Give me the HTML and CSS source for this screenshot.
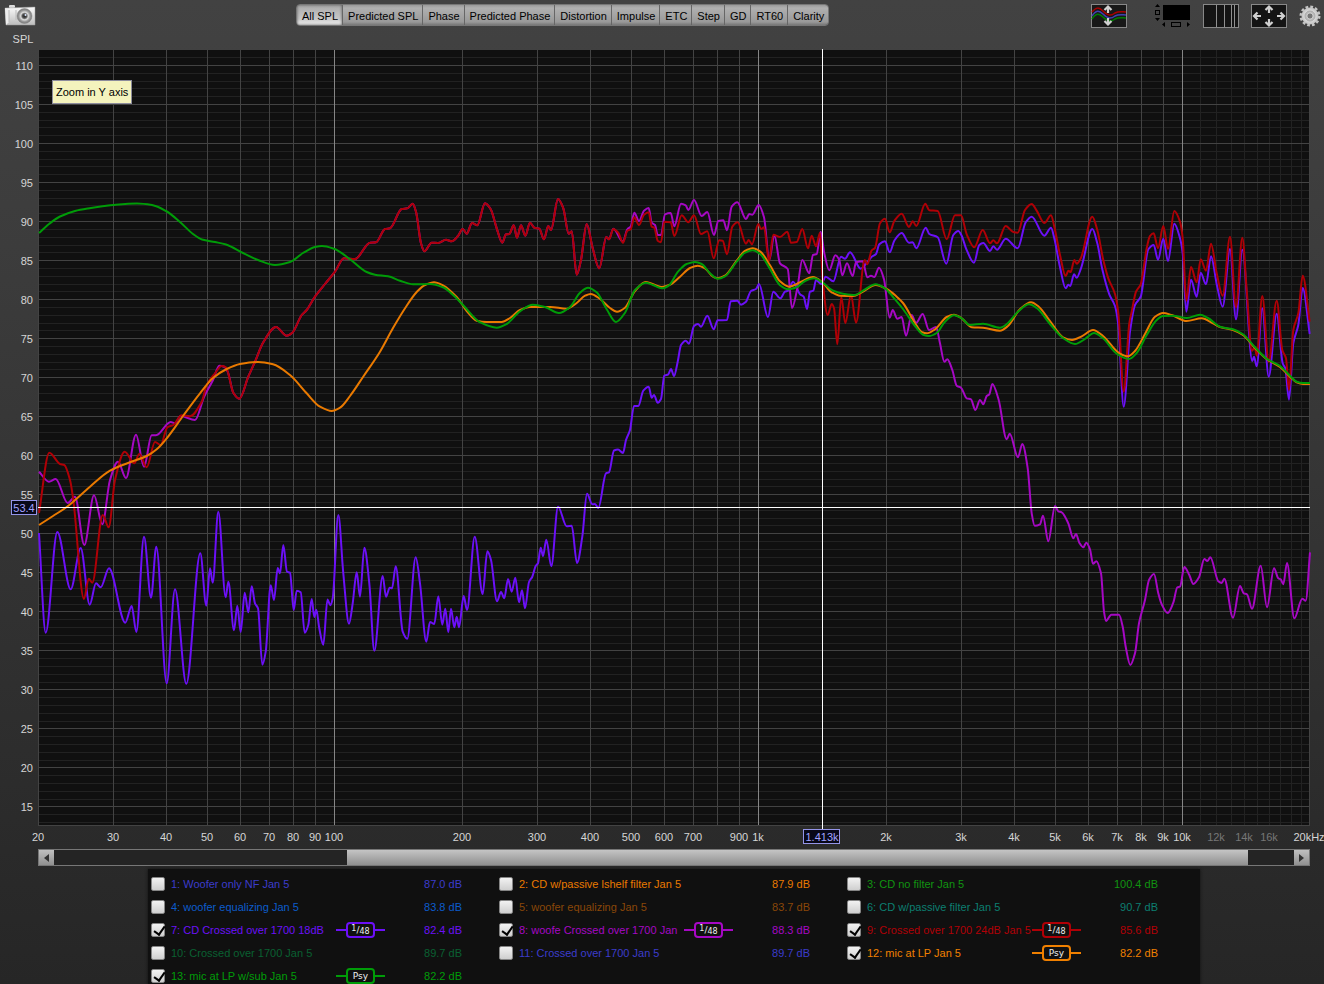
FILE: index.html
```html
<!doctype html>
<html lang="en">
<head>
    <meta charset="utf-8">
    <title>All SPL</title>
    <link rel="stylesheet" href="styles.css">
</head>
<body>
    <header class="toolbar">
        <button class="icon-button camera" aria-label="Capture graph">
            <svg width="32" height="22" viewBox="0 0 32 22">
                <defs>
                    <linearGradient id="body" x1="0" y1="0" x2="0" y2="1">
                        <stop offset="0" stop-color="#fafafa"/>
                        <stop offset="1" stop-color="#bdbdbd"/>
                    </linearGradient>
                    <radialGradient id="lens">
                        <stop offset="0" stop-color="#222"/>
                        <stop offset=".3" stop-color="#555"/>
                        <stop offset=".5" stop-color="#ddd"/>
                        <stop offset=".75" stop-color="#999"/>
                        <stop offset="1" stop-color="#777"/>
                    </radialGradient>
                </defs>
                <rect x="5" y="1" width="6" height="3" rx="1" fill="#ddd"/>
                <path d="M1 4 L31 3 L31 21 L2 21 Z" fill="url(#body)" stroke="#999" stroke-width=".5"/>
                <path d="M1 4 L5 6 V18 L2 21 Z" fill="#eee"/>
                <path d="M5 6 V18 M12 6 V16" stroke="#bbb"/>
                <circle cx="20.500" cy="12" r="7.500" fill="url(#lens)" stroke="#888" stroke-width=".5"/>
                <circle cx="21.500" cy="11" r="1" fill="#dbe6ff"/>
            </svg>
        </button>
        <nav class="tabs">
            <button class="tab active">All SPL</button>
            <button class="tab">Predicted SPL</button>
            <button class="tab">Phase</button>
            <button class="tab">Predicted Phase</button>
            <button class="tab">Distortion</button>
            <button class="tab">Impulse</button>
            <button class="tab">ETC</button>
            <button class="tab">Step</button>
            <button class="tab">GD</button>
            <button class="tab">RT60</button>
            <button class="tab">Clarity</button>
        </nav>
        <div class="tools">
            <button class="icon-button" aria-label="Separate traces">
                <svg width="36" height="24" viewBox="0 0 36 24">
                    <rect x=".5" y=".5" width="35" height="23" fill="#181818" stroke="#888"/>
                    <g fill="none" stroke-width="1.500">
                        <path d="M1 8 C5 3 8 3 12 7 C17 12 20 12 24 9 C28 7 31 8 35 8" stroke="#a80000"/>
                        <path d="M1 12 C5 6 8 6 12 10 C17 15 20 15 24 12 C28 10 31 11 35 11" stroke="#4040b0"/>
                        <path d="M1 15 C5 9 8 9 12 13 C17 18 20 18 24 15 C28 13 31 14 35 14" stroke="#007c00"/>
                    </g>
                    <path d="M17 9 V3 M13.500 6 L17 2.500 L20.500 6 M17 14 V20 M13.500 17 L17 20.500 L20.500 17" fill="none" stroke="#d0d0d0" stroke-width="2.200"/>
                </svg>
            </button>
            <button class="icon-button" aria-label="Scrollbars">
                <svg width="37" height="24" viewBox="0 0 37 24">
                    <rect x="9" y="1" width="27" height="15"/>
                    <path d="M1 3 L3.500 0 L6 3 Z M1 14 L3.500 17 L6 14 Z M11 18 L8 20.500 L11 23 Z M33 18 L36 20.500 L33 23 Z"/>
                    <rect x="1.500" y="6.500" width="4" height="4" fill="none" stroke="#000"/>
                    <rect x="17.500" y="18.500" width="9" height="4" fill="none" stroke="#000"/>
                </svg>
            </button>
            <button class="icon-button" aria-label="Frequency axis">
                <svg width="36" height="24" viewBox="0 0 36 24">
                    <rect x=".5" y=".5" width="35" height="23" fill="#141414" stroke="#888"/>
                    <path d="M13.500 1 V23 M21.500 1 V23 M28.500 1 V23 M31.500 1 V23" stroke="#909090"/>
                </svg>
            </button>
            <button class="icon-button" aria-label="Graph limits">
                <svg width="36" height="24" viewBox="0 0 36 24">
                    <rect x=".5" y=".5" width="35" height="23" fill="#141414" stroke="#888"/>
                    <path d="M18 9 V3 M14.500 6 L18 2.500 L21.500 6 M18 15 V21 M14.500 18 L18 21.500 L21.500 18 M10 12 H3 M6.500 8.500 L3 12 L6.500 15.500 M26 12 H33 M29.500 8.500 L33 12 L29.500 15.500" fill="none" stroke="#d0d0d0" stroke-width="2.200"/>
                </svg>
            </button>
            <button class="icon-button gear" aria-label="Graph controls">
                <svg width="22" height="22" viewBox="0 0 22 22">
                    <defs>
                        <radialGradient id="steel">
                            <stop offset="0" stop-color="#999"/>
                            <stop offset=".5" stop-color="#e4e4e4"/>
                            <stop offset="1" stop-color="#c0c0c0"/>
                        </radialGradient>
                    </defs>
                    <circle cx="11" cy="11" r="9" fill="none" stroke="#c4c4c4" stroke-width="3" stroke-dasharray="2.700 2.012"/>
                    <circle cx="11" cy="11" r="8.500" fill="url(#steel)"/>
                    <circle cx="11" cy="11" r="5" fill="#bbb" stroke="#aaa"/>
                    <circle cx="11" cy="11" r="3" fill="#777" stroke="#eee" stroke-width=".6"/>
                </svg>
            </button>
        </div>
    </header>

    <main class="graph">
        <svg id="chart" class="chart" viewBox="0 32 1324 816" role="img" aria-label="SPL against frequency"></svg>
        <div class="tooltip" role="tooltip">Zoom in Y axis</div>
    </main>

    <div class="scrollbar">
        <button class="scroll-arrow" aria-label="Scroll left">
            <svg width="5" height="8" viewBox="0 0 5 8"><path d="M5 0 L0 4 L5 8 Z" fill="#333"/></svg>
        </button>
        <div class="track"><div class="thumb"></div></div>
        <button class="scroll-arrow" aria-label="Scroll right">
            <svg width="5" height="8" viewBox="0 0 5 8"><path d="M0 0 L5 4 L0 8 Z" fill="#333"/></svg>
        </button>
    </div>

    <section class="legend">
        <div class="item c1"><input type="checkbox" id="m1"><label for="m1">1: Woofer only NF Jan 5</label><output>87.0 dB</output></div>
        <div class="item c2"><input type="checkbox" id="m2"><label for="m2">2: CD w/passive lshelf filter Jan 5</label><output>87.9 dB</output></div>
        <div class="item c3"><input type="checkbox" id="m3"><label for="m3">3: CD no filter Jan 5</label><output>100.4 dB</output></div>
        <div class="item c4"><input type="checkbox" id="m4"><label for="m4">4: woofer equalizing Jan 5</label><output>83.8 dB</output></div>
        <div class="item c5"><input type="checkbox" id="m5"><label for="m5">5: woofer equalizing Jan 5</label><output>83.7 dB</output></div>
        <div class="item c6"><input type="checkbox" id="m6"><label for="m6">6: CD w/passive filter Jan 5</label><output>90.7 dB</output></div>
        <div class="item c7"><input type="checkbox" id="m7" checked><label for="m7">7: CD Crossed over 1700 18dB</label><span class="key"><span class="badge"><sup>1</sup>/<sub>48</sub></span></span><output>82.4 dB</output></div>
        <div class="item c8"><input type="checkbox" id="m8" checked><label for="m8">8: woofe Crossed over 1700 Jan</label><span class="key"><span class="badge"><sup>1</sup>/<sub>48</sub></span></span><output>88.3 dB</output></div>
        <div class="item c9"><input type="checkbox" id="m9" checked><label for="m9">9: Crossed over 1700 24dB Jan 5</label><span class="key"><span class="badge"><sup>1</sup>/<sub>48</sub></span></span><output>85.6 dB</output></div>
        <div class="item c10"><input type="checkbox" id="m10"><label for="m10">10: Crossed over 1700 Jan 5</label><output>89.7 dB</output></div>
        <div class="item c11"><input type="checkbox" id="m11"><label for="m11">11: Crossed over 1700 Jan 5</label><output>89.7 dB</output></div>
        <div class="item c12"><input type="checkbox" id="m12" checked><label for="m12">12: mic at LP Jan 5</label><span class="key"><span class="badge">Psy</span></span><output>82.2 dB</output></div>
        <div class="item c13"><input type="checkbox" id="m13" checked><label for="m13">13: mic at LP w/sub Jan 5</label><span class="key"><span class="badge">Psy</span></span><output>82.2 dB</output></div>
    </section>

    <script src="chart.js"></script>
</body>
</html>
```
FILE: styles.css
```css
* {
    box-sizing: border-box;
}
body {
    display: flex;
    flex-direction: column;
    min-height: 100vh;
    margin: 0;
    overflow: hidden;
    background: linear-gradient(#424242, #3c3c3c 25%, #262626);
    font-family: "Liberation Sans", Arial, sans-serif;
    font-size: 11px;
    line-height: 14px;
}
button {
    font: inherit;
    padding: 0;
    border: none;
    background: none;
    color: #000;
}
svg {
    display: block;
}

/* toolbar */
.toolbar {
    display: flex;
    align-items: flex-start;
    height: 32px;
    padding: 4px 3px 0 4px;
}
.tabs {
    display: flex;
    margin-left: 260px;
    border: 1px solid #777;
    border-radius: 4px;
    overflow: hidden;
}
.tab {
    height: 20px;
    padding: 2px 4px 0 5px;
    border-right: 1px solid #666;
    background: linear-gradient(#999, #b0b0b0 15%, #999 85%, #777);
    white-space: nowrap;
}
.tab:last-child {
    border-right: none;
}
.tab.active {
    background: linear-gradient(#aaa, #c8c8c8 70%, #f4f4f4);
    box-shadow: inset 0 0 3px #555;
}
.tools {
    display: flex;
    margin-left: auto;
    gap: 12px;
}
.tools .icon-button:first-child {
    margin-right: 15px;
}

/* graph */
.graph {
    position: relative;
}
.chart {
    width: 100%;
    height: auto;
}
.chart text {
    fill: #d6d6d6;
    font-size: 11px;
    text-anchor: middle;
}
.chart .y-label {
    text-anchor: end;
}
.chart .dim {
    fill: #777;
}
.plot {
    fill: #101010;
}
.minor {
    stroke: #222;
}
.major {
    stroke: #434343;
}
.decade {
    stroke: #858585;
}
.cursor {
    stroke: #fff;
}
.readout {
    fill: #080818;
    stroke: #9494e8;
}
.chart .readout-text {
    fill: #a4a4ff;
}
.trace {
    fill: none;
    stroke-width: 2;
    stroke-linejoin: round;
}
.tooltip {
    position: absolute;
    left: 52px;
    top: 48px;
    padding: 4px 3px;
    border: 1px solid #8c8c9c;
    background: #f4f3bd;
    color: #000;
}

/* scrollbar */
.scrollbar {
    display: flex;
    height: 17px;
    margin: 1px 14px 3px 38px;
    border: 1px solid #777;
}
.scroll-arrow {
    display: flex;
    align-items: center;
    justify-content: center;
    width: 15px;
    background: linear-gradient(#c0c0c0, #909090);
}
.track {
    flex: 1;
    background: #242424;
}
.thumb {
    width: 72.7%;
    height: 100%;
    margin-left: 23.6%;
    background: linear-gradient(#c4c4c4, #909090);
}

/* legend */
.legend {
    display: grid;
    grid-template-columns: repeat(3, 311px);
    gap: 9px 37px;
    align-self: flex-start;
    margin-left: 148px;
    padding: 8px 42px 2px 3px;
    background: #101010;
    box-shadow: 0 0 3px #101010;
}
.item {
    display: grid;
    grid-template-columns: 20px 165px 49px 77px;
    grid-template-rows: 14px;
    align-items: center;
}
.item label {
    white-space: nowrap;
}
.item output {
    grid-column: 4;
    text-align: right;
}
.item input {
    appearance: none;
    position: relative;
    width: 14px;
    height: 14px;
    margin: 0;
    border: 1px solid #858585;
    border-radius: 2px;
    background: linear-gradient(#f2f2f2, #cfcfcf);
}
.item input:checked::after {
    content: "";
    position: absolute;
    left: 4px;
    top: 0;
    width: 5px;
    height: 9px;
    border: solid #000;
    border-width: 0 2px 2px 0;
    transform: rotate(35deg);
}
.key {
    grid-column: 3;
    display: flex;
    align-items: center;
}
.key::before,
.key::after {
    content: "";
    flex: 1;
    height: 2px;
    background: currentColor;
}
.badge {
    width: 29px;
    height: 16px;
    border: 2px solid;
    border-radius: 4px;
    color: inherit;
    font-family: "DejaVu Sans", sans-serif;
    font-size: 9px;
    line-height: 12px;
    text-align: center;
    -webkit-text-fill-color: #eee;
}
.badge sup,
.badge sub {
    font-size: 8px;
    line-height: 0;
}
.badge sup {
    vertical-align: 2px;
}
.badge sub {
    vertical-align: -1px;
}
.c1, .c11 { color: #3c3ccc; }
.c2 { color: #ea7a00; }
.c3 { color: #109410; }
.c4 { color: #0c5ccc; }
.c5 { color: #8a4708; }
.c6 { color: #0c7f70; }
.c7 { color: #6c10f8; }
.c8 { color: #a608c4; }
.c9 { color: #b00006; }
.c10 { color: #0a6032; }
.c12 { color: #f08000; }
.c13 { color: #009c08; }
```
FILE: chart.js
```js
var chart = document.getElementById('chart');
var LEFT = 38.5, RIGHT = 1310, TOP = 50, BOTTOM = 825;

function add(tag, attrs, text) {
    var el = document.createElementNS('http://www.w3.org/2000/svg', tag);
    for (var k in attrs) el.setAttribute(k, attrs[k]);
    if (text) el.textContent = text;
    chart.appendChild(el);
}
function xOf(f) { return Math.floor(334.9 + 424 * Math.log10(f / 100)) + 0.5; }
function yOf(db) { return Math.floor(65.5 + (110 - db) * 7.805) + 0.5; }
function vline(f, cls) { add('line', { x1: xOf(f), x2: xOf(f), y1: TOP, y2: BOTTOM, 'class': cls }); }

// grid
add('rect', { x: 38, y: TOP, width: RIGHT - 38, height: BOTTOM - TOP, 'class': 'plot' });
var db, f, i;
for (db = 13; db <= 111; db++) {
    if (db % 5) add('line', { x1: LEFT, x2: RIGHT, y1: yOf(db), y2: yOf(db), 'class': 'minor' });
}
for (f = 11000; f < 20000; f += 1000) vline(f, 'minor');
for (db = 15; db <= 110; db += 5) {
    add('line', { x1: LEFT, x2: RIGHT, y1: yOf(db), y2: yOf(db), 'class': 'major' });
    add('text', { x: 33, y: yOf(db) + 4.5, 'class': 'y-label' }, String(db));
}
for (i = 2; i <= 9; i++) {
    if (i > 2) vline(i * 10, 'major');
    vline(i * 100, 'major');
    vline(i * 1000, 'major');
}
[100, 1000, 10000].forEach(function (d) { vline(d, 'decade'); });
add('path', { d: 'M38.5 50 V825 M38 825.5 H1310 M1309.5 50 V825', 'class': 'major' });

// axis labels
add('text', { x: 23, y: 43 }, 'SPL');
[20, 30, 40, 50, 60, 70, 80, 90, 100, 200, 300, 400, 500, 600, 700, 900].forEach(function (n) {
    add('text', { x: xOf(n) - 0.5, y: 841 }, String(n));
});
[1, 2, 3, 4, 5, 6, 7, 8, 9, 10, 12, 14, 16].forEach(function (n) {
    add('text', { x: xOf(n * 1000) - 0.5, y: 841, 'class': n > 10 ? 'dim' : '' }, n + 'k');
});
add('text', { x: 1309, y: 841 }, '20kHz');

// traces: x,y pairs in chart units
var lowRed = '233.3,392.7 239.3,398.7 248.3,376.7 255,361.7 263.3,342.3 276,327 286.7,335.7 292.3,332.7 301.7,315 306.7,310 315,296.7 325,284 335,271.7 344,258.3 355,259 370,242.7 376,242.3 385,229 390,228.3 401.7,209 407.3,208.3 412.7,203.7 416,211.7 421,243.3 424.3,251.3 431.7,242.7 438,243 446,239.7 451.7,241.3 458,236 462.7,229 466.7,233.7 472,223 477.3,225.3 485,203.3 490.7,209.3 496.7,228.3 502.3,242.7 506,234.3 509.3,234 513.7,225.3 517,237.7 521,225.3 525.3,235.7 530,222.7 534.3,227.7 539.3,228.7 544,239.3 548.3,226 551,230 558,199 563.3,208.3 568.7,233.7 571.7,231.3 576.7,274.7 581,260 586.7,224 592.7,248.3 599.3,268.3 606.3,237 609,239.3 ';

var traces = [
    ['#6c10f8', '39,533 45.7,632.7 57.3,532 70.7,589.3 80.7,548 89.7,604.7 96,583.3 100.7,587.3 109,568.3 125.3,622.7 131.7,606 136.3,632 144,536.7 151,597.7 156.3,546.7 166.7,683.3 175,589.3 186.3,683.7 200.3,553.3 206.3,605.7 210,568.3 212.7,582.7 218.3,511.7 225.7,597.3 228.3,581.7 234,630.3 237.3,605.7 240.7,632 244.7,592.7 248.3,612.3 251.7,586.3 255,603.3 258,608.3 262.3,664.7 265.7,651.7 270.7,585.3 274,600 277.7,568 280,573.3 283.3,545 287,571.7 290,572.7 293.7,610 296.7,590.7 300.7,592.3 304.7,632.7 308.3,625 311.7,599 314.3,617 316.3,609.7 319.3,628.3 323.3,644.7 327.5,599.5 330.3,605.3 332.7,598.3 338.3,515 343.3,573.3 349,623.7 352.7,603.3 356.7,572.3 360,596.7 364.3,547.7 369.3,583.3 374.3,650.7 382.7,576 386,596.7 389.7,587.7 392,588.3 395.7,566.3 402.7,631.7 407.3,638.7 415.7,557.3 420,583.3 426.3,641.7 430,622 434.3,624 438.3,596.3 442.3,624.7 445.3,608.7 448.3,632.3 451,608.7 454.3,627.3 456.7,616.7 459,627.3 463.7,596 467,610 474.7,536.7 482.7,594 487.3,551.3 491,560 497,601.3 501,592 504.3,598.3 508,579 511.7,591.7 515.3,577.7 519,602.3 522,590.3 525,608.3 529,582 532.3,576.7 535.7,566 538,563.3 540.7,547.7 543,556 546.3,539.7 551.3,566.3 558,506.7 566.7,526.3 571.7,525.7 577,563 582.3,536.7 587,493.7 592.3,504.3 595,504 598.3,508 606,473.3 609,472.3 614,450.5 618,449.5 623,453 626,440 630,430 634,406 638.3,406 643.3,390.7 648.7,386.7 651.7,397.7 654,395 657.7,402.7 661,399 664.3,375.7 668.3,374.3 671,369 674,376 677.7,361.7 681,345 685.7,340.7 689,343.7 694,326 698,324 701,326.7 707.3,315.7 713.7,329.3 717.7,320.3 727,320 730.7,301.3 737.3,300.7 741,304.7 745.7,302 751,291 756,289 759,284 768,317 773.3,291.7 780.3,298.3 785,291.7 788.3,290.7 793,281.7 800,294.3 803.7,296.7 807,309 810,291.7 813.3,290.7 816,280 821.3,284 825.7,276.7 833.3,281.3 841,256.7 845,258.7 850,252.3 860.7,268.7 866.7,263 871.7,256.7 876,254 879.3,244.3 885,241.3 889.7,252.3 894.3,240.7 901.7,233 909,242.7 912.7,242.3 916.3,248.3 925.7,227.7 929.3,234 937.7,237.3 946.3,263.7 953.3,235 958.3,231 961.7,235.7 966,248.3 974,262.7 979.3,245 983.3,243 990,251 993.3,246.3 997,249.7 1005.7,238.7 1017.7,248.3 1025.7,222.3 1031.7,216.7 1044.3,235.7 1051,227.7 1054.3,238.3 1060,267.3 1065.7,288.3 1068.3,284.7 1070.3,286 1074,274.3 1076.7,277.7 1081,268.3 1092.3,229 1097.3,243.3 1102.3,269.3 1109.3,294.3 1115,306 1118.3,325 1123.7,406.7 1130,331.7 1135,305 1140.7,296.7 1148.3,249.3 1153.7,245 1158,259.7 1163.3,238.7 1168,261 1174.3,223.7 1180,238.3 1182.7,253.3 1186.3,311.7 1191,279.7 1196.7,296.7 1200.7,272.7 1206,284.3 1211,256.3 1217,285.7 1222.7,306.7 1230,249 1236,319.3 1242.3,249.7 1252.3,361 1254,356.7 1256.7,366.3 1262.3,308.3 1268.7,376.7 1276.7,313.7 1282.7,363.3 1285.3,368.3 1289,399.7 1293.3,343.3 1298.3,325 1302.7,288 1309.7,334'],
    ['#a608c4', '39,471.7 49,481.7 55.7,479 67.7,503 75,496.7 84.3,545 94,495.3 102.3,524.3 110,480 118,461.7 126,478 136,434.7 144,466.7 151.7,435.3 156,435.3 170.7,422 175,423.3 180.7,416 195,420 204,397 213,380 219.3,365.7 224,366.7 227.7,371.7 ' + lowRed + '613.3,228.7 623,241.7 627.3,229.3 630.7,226.7 634.3,212.7 639,221 644,210.7 648.7,208 651.7,222.7 655,225 657.7,235 661,235 665,214.3 670.7,213 674.3,226.3 681,203.7 685.7,205.3 688.3,210 694,200 701.7,216 707.3,212 714,235 718.3,221 723.3,220.3 727,230.3 731.7,206.7 737.3,202.3 746,219 749.3,214 752.3,214.7 758.7,205 764,217.3 769.3,260 774.3,235 780,263.3 787.7,269 792,308 797.3,288.3 802.3,260 809.3,273.3 813,255 816.7,254 820.7,231.7 824,251.7 829.3,270.3 835.3,255.3 839.3,260 842.3,275.3 847,263.3 852.7,276 856,262.3 862.7,261.3 867.3,277.3 871,275.7 874.3,277 879,267.7 884,279.3 889.7,317.7 892.7,310 897.3,318.7 901.7,317 906,335.7 911.7,315 916,323 922.7,314 929,330 936,327 940,343.3 944.3,361.7 947.3,359.3 952.3,370 956.7,385.7 961,387.7 966.7,398.3 971,399.3 975.3,410 980,400 983.3,404.3 986.7,396 989.3,394.3 992.3,384 998.7,400 1006.7,439.3 1009.7,433.7 1018,457.3 1022.3,444 1027.7,468.3 1031.7,513.3 1034.7,525.7 1040,524.3 1043,515.7 1048.3,541.3 1055,506 1058.3,511.3 1061.7,512.3 1068.3,523.3 1073.3,538.3 1076,534 1079.3,542.7 1083.3,547.3 1086.3,542.7 1090,549.3 1093,563.7 1096.3,561.3 1101,573.3 1104,611.7 1106,621 1111.3,614.7 1119,614.7 1122.7,626.7 1125.7,646.7 1130.3,665 1135,653.3 1139,623.3 1145,600 1149,580 1154,574 1158.3,593.3 1161.7,604.3 1167.7,613 1173.3,602.7 1177.3,587.3 1180,586.7 1184.3,567 1189.3,575 1193.3,584 1199,577.3 1204.3,559 1207.3,561 1210.3,557.3 1218.3,581.3 1221.7,583 1224.3,578.7 1233,617.7 1240,586 1243.7,593.3 1247,594.3 1252,608.7 1260.7,565.7 1267,607.3 1274,568.3 1278.3,578.3 1280.7,579.3 1283.3,584.3 1287,563 1294.3,618.3 1302.3,598.7 1305.7,600.7 1310,552.3'],
    ['#b00006', '39,513 49.3,452.7 60,464 64.3,465 70,480 73.3,500 84,599 88.7,578.7 92.3,582.7 102.7,515 108.7,527.3 115,480 124.7,451.7 134.3,463.3 139.3,454 146.7,467.3 155,442 160.7,445 167.3,427.3 173.3,425 181.7,415.3 190,416.3 201.7,401.7 206.7,385 215,373.3 221.7,366 226,367.3 ' + lowRed + '613.3,229 618.3,232.7 623,242.7 627.3,230.7 630.7,229.3 634.3,217.3 639,225 644,214.7 648.7,212.3 651.7,226.7 654.3,227.7 657.7,240.7 661,242.3 664.3,221.7 670.7,222.3 674.3,236 681.7,215.3 688.3,222.3 694,215.3 701,234 707.3,231.3 713.7,258.3 719.3,240.3 722.7,240.7 727,254.3 732.3,226.7 737.7,222.3 746,243.7 748.7,240 752,244.3 758.3,224 761,229 764,227.3 769,261 773.3,234.7 780,237 787.3,231.7 791,242.7 796.7,242 802.3,229 808,248.3 811.7,235.7 816,246.3 820,232.7 822.7,280 827.7,315 831.7,304 834,308 837.3,344.3 841.3,296.7 845.3,323.3 851,295 856,322.7 864.7,260 867.3,264.3 871.7,250.3 875,248 880,223.3 885,218.7 889.7,232.3 894.3,221 901.7,213.7 909,227 912.7,221.3 916.3,226 925.3,203.7 929.3,210.3 937.7,211 946.7,239.3 955,215.3 961,215.3 966.7,234.3 974.3,247.3 982.7,230 990,243.3 993.3,240.3 997,243.3 1005.7,226 1013.3,232 1017.7,232.7 1025,210 1031.7,204 1036.7,210.7 1044.3,223 1051,215.3 1054.3,226.7 1060,255 1065.7,276 1068.3,270.7 1070.7,272 1074.3,260 1076.7,263.7 1081,257.7 1092.3,216.7 1097.3,230 1103.3,260 1108.3,278.3 1115,294 1118.3,313 1123.7,391.7 1129.3,323.3 1131.7,311.7 1136,291.7 1140.7,284.3 1146.7,248.3 1150,236 1153.7,233.3 1158,248.3 1163.3,226 1168,249 1174.3,211 1180,221.7 1182.7,238.3 1186.3,300.7 1191,267 1196.7,282.3 1200.7,259.3 1206,270.7 1211,243.7 1216.7,273.3 1222.7,295.7 1230,236.7 1236,307.3 1242.3,237.7 1246.7,290 1252,351 1254.7,346.7 1256.7,355.7 1262.3,296 1268.7,361.7 1276.7,300.7 1282.3,350 1286,358.3 1289,390 1293.3,330 1298.3,313.3 1302.7,275.7 1309.7,321.7'],
    ['#ea7a00', '39,525 53,516 66.7,507 90,486.7 110,470.7 130,462.3 146.7,456 156.7,449.3 166.7,438.3 183,416 200,393.3 213,378 226.7,369 240,364 258,362 273,364.3 290,375 306.7,393.3 320,406.7 331.7,411 340,407.7 350,396 363,377 380,351.7 393,328 406.7,305.7 416.7,292 425,285 434,282.3 443,285.3 456.7,297 466.7,311 476.7,320.7 486.7,322 501.7,322 510,318 520,310 530,307 550,307 566.7,308.7 576.7,303 585,295.7 590.7,294 600,299 610,308 617,311.7 625,307.7 635,291 645.7,282 661.7,287 670,284.7 680,276.7 690,268 697.7,265.7 705,268.3 713,276.7 718,278.3 725,275.7 736.7,260.7 745,251 752.7,248.3 760,251.3 770,265.3 780,281.3 789,286.7 800,282.3 813,277 822.7,282.7 831.7,292.3 840,295.7 853,296 861.7,292.3 875.7,285 886.7,289 896.7,296.7 903,303 915,323 921.7,332 926.7,333.3 935,329.3 946.7,317 954,314.7 961.7,318.3 971.7,327.3 983,327.7 1000,330.7 1008,326 1020,309.3 1031,302.3 1038,306 1050,321 1063,337.3 1072,340 1081.7,336.3 1093,330 1103,336 1119,353 1128,356.3 1135,351 1145,334 1155,316.7 1163,313 1171.7,315 1186.7,321 1201.7,318.3 1213,323.3 1220,327 1233,330 1243,335 1255,348 1266.7,359 1280,367 1290,376.7 1296.7,382.3 1303,384 1310,384'],
    ['#009c08', '39,233 49,224 60,216.5 75,211 88,208.5 113,205 137,203.5 152,205 166,211 180,222 193,234 202,239.5 215,242 226,244.5 243,253 258,260 275,265 290,262 303,253 315,247 322,246 334,248.7 351,260 366.7,272 375,274.7 388,276.3 400,280.7 413,284.3 430,284 443,287.3 453,295 463,305 480,322.3 496.7,327.7 506.7,324 520,311.3 533,304.7 545,307 559,313 570,307 580,292.7 588,287.7 596.7,292.3 606.7,309.3 616,322 625,312.7 635,290 645.7,282.7 653,285 661.7,288.3 669,285.3 678,271.7 686.7,264 695,262 701.7,264 710,273.3 717.7,278.7 725,276.3 736.7,261.7 745,252.7 752.7,250.3 760,254 770,269 780,285.3 788,289.3 796.7,287.3 805,281 814,278.3 822.7,282.7 833,290.7 843,293.7 855,295 863,290.7 875.7,284.3 885,288.3 893,297 903,309 915,326 923,334.7 929,336 936.7,333 945,321.7 954,315.3 961.7,318.3 970,325 983,323.7 1000,327.7 1008,323 1018,311.7 1029,304.3 1036.7,308 1050,324 1063,338 1075,344 1085,339 1094,333 1103,338.3 1116.7,353.7 1129,359 1136.7,353 1146.7,335 1156.7,320 1163,316 1173,315.7 1186.7,318 1200,314.7 1208,318 1220,326.7 1233,329.3 1243,334.3 1255,347.3 1266.7,358.7 1280,366 1290,375.7 1296.7,381.7 1303,383 1310,383']
];

// monotone cubic through the points, so peaks and dips stay where the data puts them
function smooth(str) {
    var p = str.trim().split(' ').map(function (s) { return s.split(',').map(Number); });
    var n = p.length, slope = [], m = [], i, h, a, b;
    for (i = 0; i < n - 1; i++) slope.push((p[i + 1][1] - p[i][1]) / (p[i + 1][0] - p[i][0]));
    m.push(slope[0]);
    for (i = 1; i < n - 1; i++) {
        a = slope[i - 1];
        b = slope[i];
        m.push(a * b <= 0 ? 0 : 2 * a * b / (a + b));
    }
    m.push(slope[n - 2]);
    var d = 'M' + p[0].join(' ');
    for (i = 0; i < n - 1; i++) {
        h = (p[i + 1][0] - p[i][0]) / 3;
        d += ' C' + [p[i][0] + h, p[i][1] + h * m[i], p[i + 1][0] - h, p[i + 1][1] - h * m[i + 1], p[i + 1][0], p[i + 1][1]]
            .map(function (v) { return v.toFixed(1); }).join(' ');
    }
    return d;
}
traces.forEach(function (t) {
    add('path', { d: smooth(t[1]), stroke: t[0], 'class': 'trace' });
});

// cursor
add('path', { d: 'M822.5 49 V830 M38 507.5 H1310', 'class': 'cursor' });
add('rect', { x: 11.5, y: 500.5, width: 25, height: 14, 'class': 'readout' });
add('text', { x: 24, y: 512, 'class': 'readout-text' }, '53.4');
add('rect', { x: 803.5, y: 829.5, width: 36, height: 14, 'class': 'readout' });
add('text', { x: 822, y: 841, 'class': 'readout-text' }, '1.413k');
```
